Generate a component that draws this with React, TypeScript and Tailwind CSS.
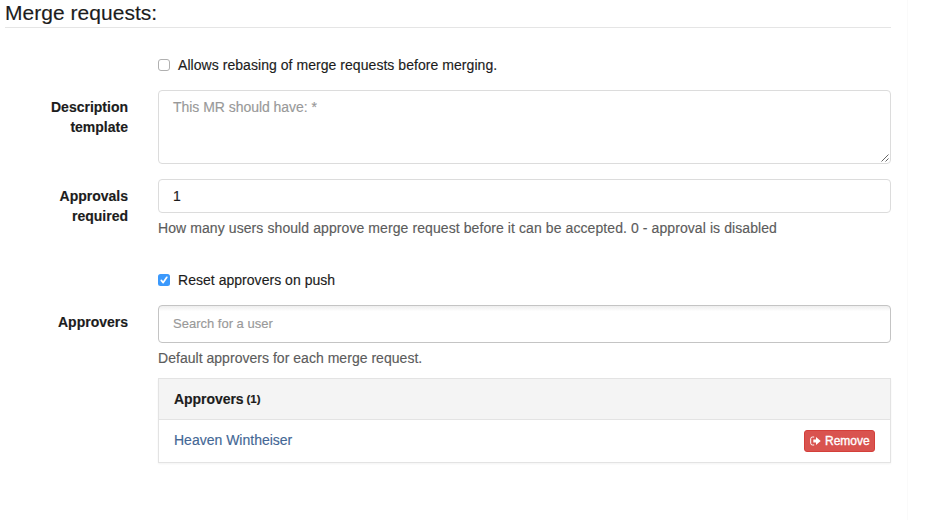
import type { ReactNode } from "react";

function FormRow({ label, className, labelClass, children }: { label?: ReactNode; className: string; labelClass?: string; children: ReactNode }) {
  return (
    <div className={`flex ${className}`}>
      <div className={`mr-[30px] w-[123px] shrink-0 text-right font-bold ${labelClass ?? ""}`}>{label}</div>
      <div className="min-w-0 flex-1">{children}</div>
    </div>
  );
}

function Checkbox({ checked, children }: { checked?: boolean; children: ReactNode }) {
  return (
    <label className="flex h-5 items-center whitespace-nowrap">
      {checked ? (
        <span className="mr-2 flex size-3 items-center justify-center rounded-[2.5px] bg-[#3b99fc]">
          <svg viewBox="0 0 12 12" className="size-3" fill="none" stroke="#fff" strokeWidth="1.7" strokeLinecap="round" strokeLinejoin="round">
            <path d="M3.3 6.4 5.2 8.6 8.8 3.3" />
          </svg>
        </span>
      ) : (
        <span className="mr-2 size-3 rounded-[3px] border border-[#b0b0b0] bg-white" />
      )}
      {children}
    </label>
  );
}

export default function App() {
  return (
    <div className="h-[520px] w-[908px] overflow-hidden border-r border-[#fafafa] bg-white pr-4 pl-[5px] font-['Liberation_Sans',Arial,sans-serif] text-sm leading-5 text-[#1c1c1c] [-webkit-text-stroke:0.15px_currentColor]">
      <h1 className="flex h-7 items-center border-b border-[#e5e5e5] pb-[2px] text-[21px] leading-6">
        <span className="tracking-[0.03px] whitespace-nowrap">Merge requests:</span>
      </h1>

      <FormRow className="mt-[27px] h-[35px]">
        <Checkbox><span className="tracking-[0.05px]">Allows rebasing of merge requests before merging.</span></Checkbox>
      </FormRow>

      <FormRow className="h-[89px]" labelClass="pt-[7px]" label={<>Description<br />template</>}>
        <div className="flex h-[74px] justify-between rounded-[4px] border border-[#dcdcdc] pt-1.5 pl-3.5 text-[#999]">
          <span className="tracking-[-0.04px]">This MR should have: *</span>
          <svg viewBox="0 0 8 8" className="mr-px mb-px size-2 self-end" stroke="#555" strokeWidth="0.9">
            <path d="M0.5 7.5 7.5 0.5M4.5 7.5 7.5 4.5" />
          </svg>
        </div>
      </FormRow>

      <FormRow className="h-[91px]" labelClass="pt-[7px]" label={<>Approvals<br />required</>}>
        <div className="flex h-[34px] items-center rounded-[4px] border border-[#dcdcdc] px-3.5">1</div>
        <p className="mt-[5px] tracking-[0.085px] whitespace-nowrap text-[#5c5c5c]">How many users should approve merge request before it can be accepted. 0 - approval is disabled</p>
      </FormRow>

      <FormRow className="h-[35px]">
        <Checkbox checked><span className="tracking-[0.03px]">Reset approvers on push</span></Checkbox>
      </FormRow>

      <FormRow labelClass="pt-[7px]" className="" label="Approvers">
        <div className="flex h-[38px] items-center rounded-[4px] border border-[#c4c4c4] bg-linear-to-b from-[#eee] to-white to-15% px-3.5 text-[13px] text-[#999]">
          <span>Search for a user</span>
        </div>
        <p className="mt-[5px] tracking-[0.03px] text-[#5c5c5c]">Default approvers for each merge request.</p>
        <section className="mt-[10px] h-[85px] border border-[#e3e3e3] shadow-[0_1px_2px_rgba(0,0,0,0.05)]">
          <header className="flex h-[41px] items-center border-b border-[#e3e3e3] bg-[#f4f4f4] px-[15px] font-bold tracking-[-0.05px]">
            Approvers <span className="ml-[3px] text-[11.5px]">(1)</span>
          </header>
          <div className="flex h-[42px] items-center justify-between px-[15px] text-[#446795]">
            <a className="pb-0.5">Heaven Wintheiser</a>
            <button className="flex h-[22px] w-[71px] items-center rounded-[3px] border border-[#d43f3a] bg-[#d9534f] pl-[5px] text-xs leading-none text-white">
              <svg viewBox="0 0 11 10" className="mr-1 h-[10px] w-[11px] shrink-0">
                <path d="M4.2 1H2.5Q.7 1 .7 2.8v4.4Q.7 9 2.5 9h1.7" fill="none" stroke="#fff" strokeWidth="1" />
                <path d="M3.3 3.4H6V1l4.7 4L6 9V6.6H3.3Z" fill="#fff" />
              </svg>
              <span className="[-webkit-text-stroke:0.35px_white]">Remove</span>
            </button>
          </div>
        </section>
      </FormRow>
    </div>
  );
}
